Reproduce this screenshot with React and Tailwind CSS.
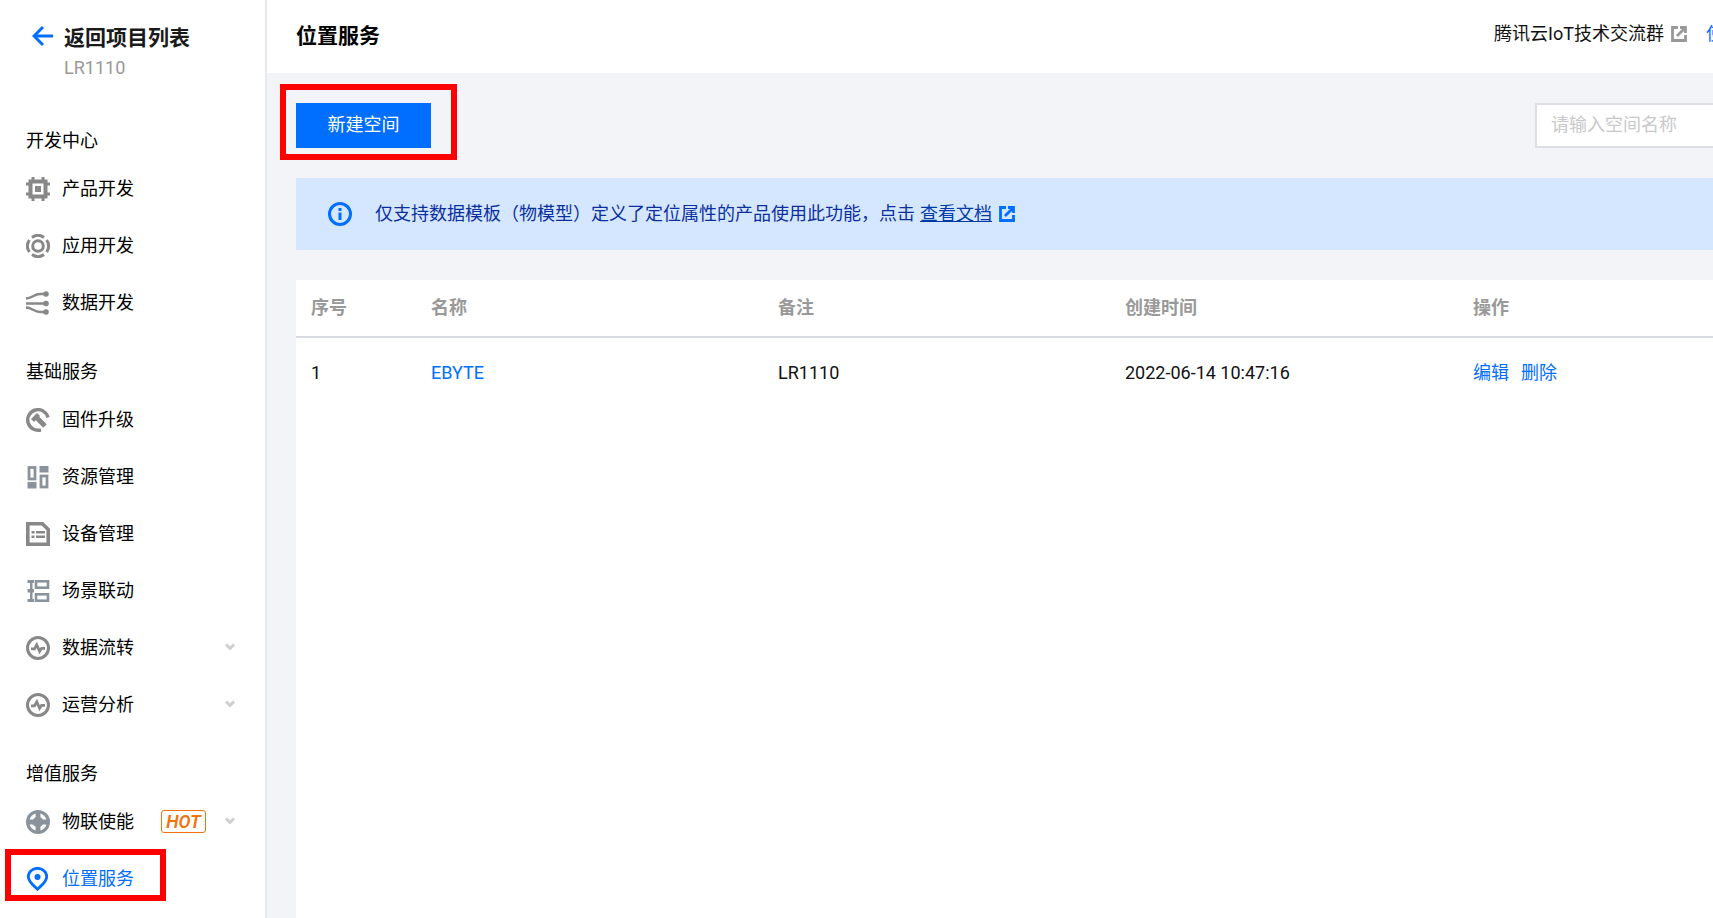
const font = { fontFamily: "Roboto, 'Noto Sans CJK SC', sans-serif" };

const Chip = () => (
  <svg width="24" height="24" viewBox="0 0 24 24" fill="#888">
    <path fillRule="evenodd" d="M2.500 2.500h19v19h-19z M6.500 6.500v11h11v-11z" />
    <rect x="9" y="9" width="6" height="6" />
    <path d="M5.500 0h3v3h-3zM15.500 0h3v3h-3zM5.500 21h3v3h-3zM15.500 21h3v3h-3zM0 5.500h3v3H0zM0 15.500h3v3H0zM21 5.500h3v3h-3zM21 15.500h3v3h-3z" />
  </svg>
);

const Ring = () => (
  <svg width="24" height="24" viewBox="0 0 24 24" fill="none" stroke="#888">
    <circle cx="12" cy="12" r="5.300" strokeWidth="3" />
    <path d="M6 3.400a10.500 10.500 0 0 1 12 0M20.600 6a10.500 10.500 0 0 1 0 12M18 20.600a10.500 10.500 0 0 1-12 0M3.400 18a10.500 10.500 0 0 1 0-12" strokeWidth="3" />
  </svg>
);

const Flows = () => (
  <svg width="24" height="24" viewBox="0 0 24 24" fill="none" stroke="#888" strokeWidth="2.400">
    <path d="M0 7.500c6 0 8-4.500 14-4.500h6M0 12.500h20M0 16.500c6 0 8 4.500 14 4.500h6" />
    <circle cx="20" cy="3" r="2.800" fill="#888" stroke="none" />
    <circle cx="20" cy="12.500" r="2.800" fill="#888" stroke="none" />
    <circle cx="20" cy="21" r="2.800" fill="#888" stroke="none" />
  </svg>
);

const Wrench = () => (
  <svg width="24" height="24" viewBox="0 0 24 24" fill="none" stroke="#888">
    <path d="M15 21.800A10.300 10.300 0 1 1 22 9.500" strokeWidth="3.400" />
    <path d="M10 9l9 9" strokeWidth="5" />
    <path d="M5 11l6-6 3 3-6 6z" fill="#888" stroke="none" />
  </svg>
);

const Blocks = () => (
  <svg width="24" height="24" viewBox="0 0 24 24" fill="none" stroke="#8a939c" strokeWidth="2.800">
    <rect x="3" y="2.500" width="6" height="11.500" />
    <rect x="15" y="11" width="6" height="11" />
    <rect x="1.500" y="17" width="9" height="6.500" fill="#8a939c" stroke="none" />
    <rect x="13.500" y="1" width="9" height="6.500" fill="#8a939c" stroke="none" />
  </svg>
);

const Card = () => (
  <svg width="24" height="24" viewBox="0 0 24 24" fill="none">
    <path d="M1.800 1.800h14.700l5.700 5.700v14.700H1.800z" stroke="#888" strokeWidth="3.600" />
    <path d="M5.500 9h3v2.500h-3zM10 9h9v2.500h-9zM5.500 13.500h3V16h-3zM10 13.500h9V16h-9z" fill="#888" />
  </svg>
);

const Scene = () => (
  <svg width="24" height="24" viewBox="0 0 24 24" fill="none">
    <path d="M1.500 1h6.500v3H1.500zM1.500 10h6.500v3.500H1.500zM1.500 20h6.500v3H1.500zM4 1h2.500v22H4z" fill="#8a939c" />
    <rect x="10" y="2.300" width="12" height="6.400" stroke="#8a939c" strokeWidth="2.600" />
    <rect x="10" y="15.300" width="12" height="6.400" stroke="#8a939c" strokeWidth="2.600" />
  </svg>
);

const Pulse = () => (
  <svg width="24" height="24" viewBox="0 0 24 24" fill="none" stroke="#888">
    <circle cx="12" cy="12" r="10.500" strokeWidth="3" />
    <path d="M5 12.800h3.500l2.300-4 2.800 6.500 2-3H19" strokeWidth="2.800" />
  </svg>
);

const Fan = () => (
  <svg width="24" height="24" viewBox="0 0 24 24" fill="#8a939c">
    <circle cx="12" cy="12" r="12" />
    <path d="M3.600 9.600A8.750 8.750 0 0 1 9.600 3.600V7L7 9.600zM14.400 3.600A8.750 8.750 0 0 1 20.400 9.600H17L14.400 7zM20.400 14.400A8.750 8.750 0 0 1 14.400 20.400V17L17 14.400zM9.600 20.400A8.750 8.750 0 0 1 3.600 14.400H7L9.600 17z" fill="#fff" />
  </svg>
);

const Pin = () => (
  <svg width="24" height="24" viewBox="0 0 24 24" fill="none">
    <path d="M11.500 22.300C7.500 18.300 2.300 14.800 2.300 9.800a9.200 8.500 0 0 1 18.400 0c0 5-5.200 8.500-9.200 12.500z" stroke="#006eff" strokeWidth="2.800" />
    <circle cx="11.500" cy="10" r="3" fill="#006eff" />
  </svg>
);

const Chevron = () => (
  <svg width="12" height="8" viewBox="0 0 12 8" fill="none" stroke="#cfcfcf" strokeWidth="3">
    <path d="M2 1.500L6 5.500l4-4" />
  </svg>
);

// external link square, colour passed in
const External = ({ color }) => (
  <svg width="16" height="16" viewBox="0 0 16 16" fill="none" stroke={color} strokeWidth="2.800">
    <path d="M7 1.500H1.500v13h13V9" />
    <path d="M6 10l7.500-7.500M9 1.500h5.500V7" />
  </svg>
);

const Info = () => (
  <svg width="24" height="24" viewBox="0 0 24 24" fill="none">
    <circle cx="12" cy="12" r="10.500" stroke="#006eff" strokeWidth="3" />
    <rect x="10.500" y="10.500" width="3" height="7.500" fill="#006eff" />
    <rect x="10.500" y="6" width="3" height="3" fill="#006eff" />
  </svg>
);

const groups = [
  {
    title: "开发中心",
    items: [
      { name: "产品开发", icon: <Chip /> },
      { name: "应用开发", icon: <Ring /> },
      { name: "数据开发", icon: <Flows /> },
    ],
  },
  {
    title: "基础服务",
    items: [
      { name: "固件升级", icon: <Wrench /> },
      { name: "资源管理", icon: <Blocks /> },
      { name: "设备管理", icon: <Card /> },
      { name: "场景联动", icon: <Scene /> },
      { name: "数据流转", icon: <Pulse />, more: true },
      { name: "运营分析", icon: <Pulse />, more: true },
    ],
  },
  {
    title: "增值服务",
    items: [
      { name: "物联使能", icon: <Fan />, more: true, hot: true },
      { name: "位置服务", icon: <Pin />, active: true },
    ],
  },
];

const Sidebar = () => (
  <aside className="relative w-[267px] shrink-0 border-r-2 border-[#e6e9f0] bg-white">
    <div className="flex h-[120px] flex-col pl-[32px] pt-[22px]">
      <div className="flex h-[30px] items-center gap-[10px]">
        <svg width="22" height="22" viewBox="0 0 22 22" fill="none" stroke="#006eff" strokeWidth="3" className="-mt-[2px]">
          <path d="M21 11H3M11 2l-9 9 9 9" />
        </svg>
        <span className="pt-[3px] text-[21px] font-bold text-[#1a1a1a]">返回项目列表</span>
      </div>
      <span className="mt-[3px] pl-[32px] text-[18px] leading-[25px] text-[#999]">LR1110</span>
    </div>
    {groups.map((g) => (
      <div key={g.title} className="mb-5">
        <div className="flex h-10 items-center pl-[26px] pt-[1px] text-[18px] text-black">{g.title}</div>
        {g.items.map((it) => (
          <div key={it.name} className="flex h-[57px] items-center pl-[26px]">
            <span className="flex w-6 shrink-0">{it.icon}</span>
            <span className={`ml-3 text-[18px] ${it.active ? "text-[#006eff]" : "text-black"}`}>{it.name}</span>
            {it.hot && (
              <span className="ml-[27px] flex h-[23px] w-[45px] items-center justify-center rounded-[3px] border border-[#f5730f] text-[18px] font-semibold italic text-[#f5730f]">
                HOT
              </span>
            )}
            {it.more && (
              <span className={`-mt-[2px] flex ${it.hot ? "ml-[18px]" : "ml-[90px]"}`}>
                <Chevron />
              </span>
            )}
          </div>
        ))}
      </div>
    ))}
    <div className="absolute left-[5px] top-[849px] h-[52px] w-[161px] border-[6px] border-[#ff0000]" />
  </aside>
);

const Main = () => (
  <main className="flex min-w-0 flex-1 flex-col overflow-hidden">
    <header className="flex h-[73px] shrink-0 items-center bg-white pl-[29px]">
      <h1 className="pt-[1px] text-[21px] font-bold text-black">位置服务</h1>
      <div className="ml-auto flex shrink-0 items-center pb-[6px]">
        <span className="text-[18px] text-[#111]">腾讯云IoT技术交流群</span>
        <span className="ml-[7px] flex"><External color="#999" /></span>
        <span className="ml-[19px] w-[7px] overflow-hidden whitespace-nowrap text-[18px] text-[#006eff]">使用文档</span>
      </div>
    </header>
    <div className="relative flex-1 bg-[#f2f4f8] pl-[29px]">
      <div className="absolute left-[13px] top-[11px] h-[76px] w-[177px] border-[6px] border-[#ff0000]" />
      <div className="flex h-[105px] items-start justify-between pt-[30px]">
        <button className="h-[45px] w-[135px] bg-[#006eff] pb-[2px] text-[18px] text-white">新建空间</button>
        <div className="flex h-[45px] w-[178px] items-center border-2 border-r-0 border-[#dcdfe4] bg-white pb-[2px] pl-[14px] text-[18px] text-[#c9c9c9]">
          请输入空间名称
        </div>
      </div>
      <div className="flex h-[72px] items-center bg-[#d5e7ff] pl-[32px] text-[18px] text-[#0b2f9f]">
        <Info />
        <span className="ml-[23px] pb-[2px]">仅支持数据模板（物模型）定义了定位属性的产品使用此功能，点击</span>
        <span className="ml-[5px] pb-[2px] text-[#003aa8] underline">查看文档</span>
        <span className="ml-[7px] flex"><External color="#006eff" /></span>
      </div>
      <div className="mt-[30px] h-[640px] bg-white text-[18px]">
        <div className="grid h-[58px] grid-cols-[120px_347px_347px_348px_1fr] items-center border-b-2 border-[#d9dbe3] pb-[2px] font-bold text-[#999]">
          <div className="pl-[15px]">序号</div>
          <div className="pl-[15px]">名称</div>
          <div className="pl-[15px]">备注</div>
          <div className="pl-[15px]">创建时间</div>
          <div className="pl-[15px]">操作</div>
        </div>
        <div className="grid h-[70px] grid-cols-[120px_347px_347px_348px_1fr] items-center pb-[2px] text-[#111]">
          <div className="pl-[15px]">1</div>
          <div className="pl-[15px] text-[#006eff]">EBYTE</div>
          <div className="pl-[15px]">LR1110</div>
          <div className="pl-[15px]">2022-06-14 10:47:16</div>
          <div className="flex gap-[12px] pl-[15px] text-[#006eff]">
            <span>编辑</span>
            <span>删除</span>
          </div>
        </div>
      </div>
    </div>
  </main>
);

export default function App() {
  return (
    <div className="flex h-[918px] w-[1713px] overflow-hidden bg-white" style={font}>
      <Sidebar />
      <Main />
    </div>
  );
}
